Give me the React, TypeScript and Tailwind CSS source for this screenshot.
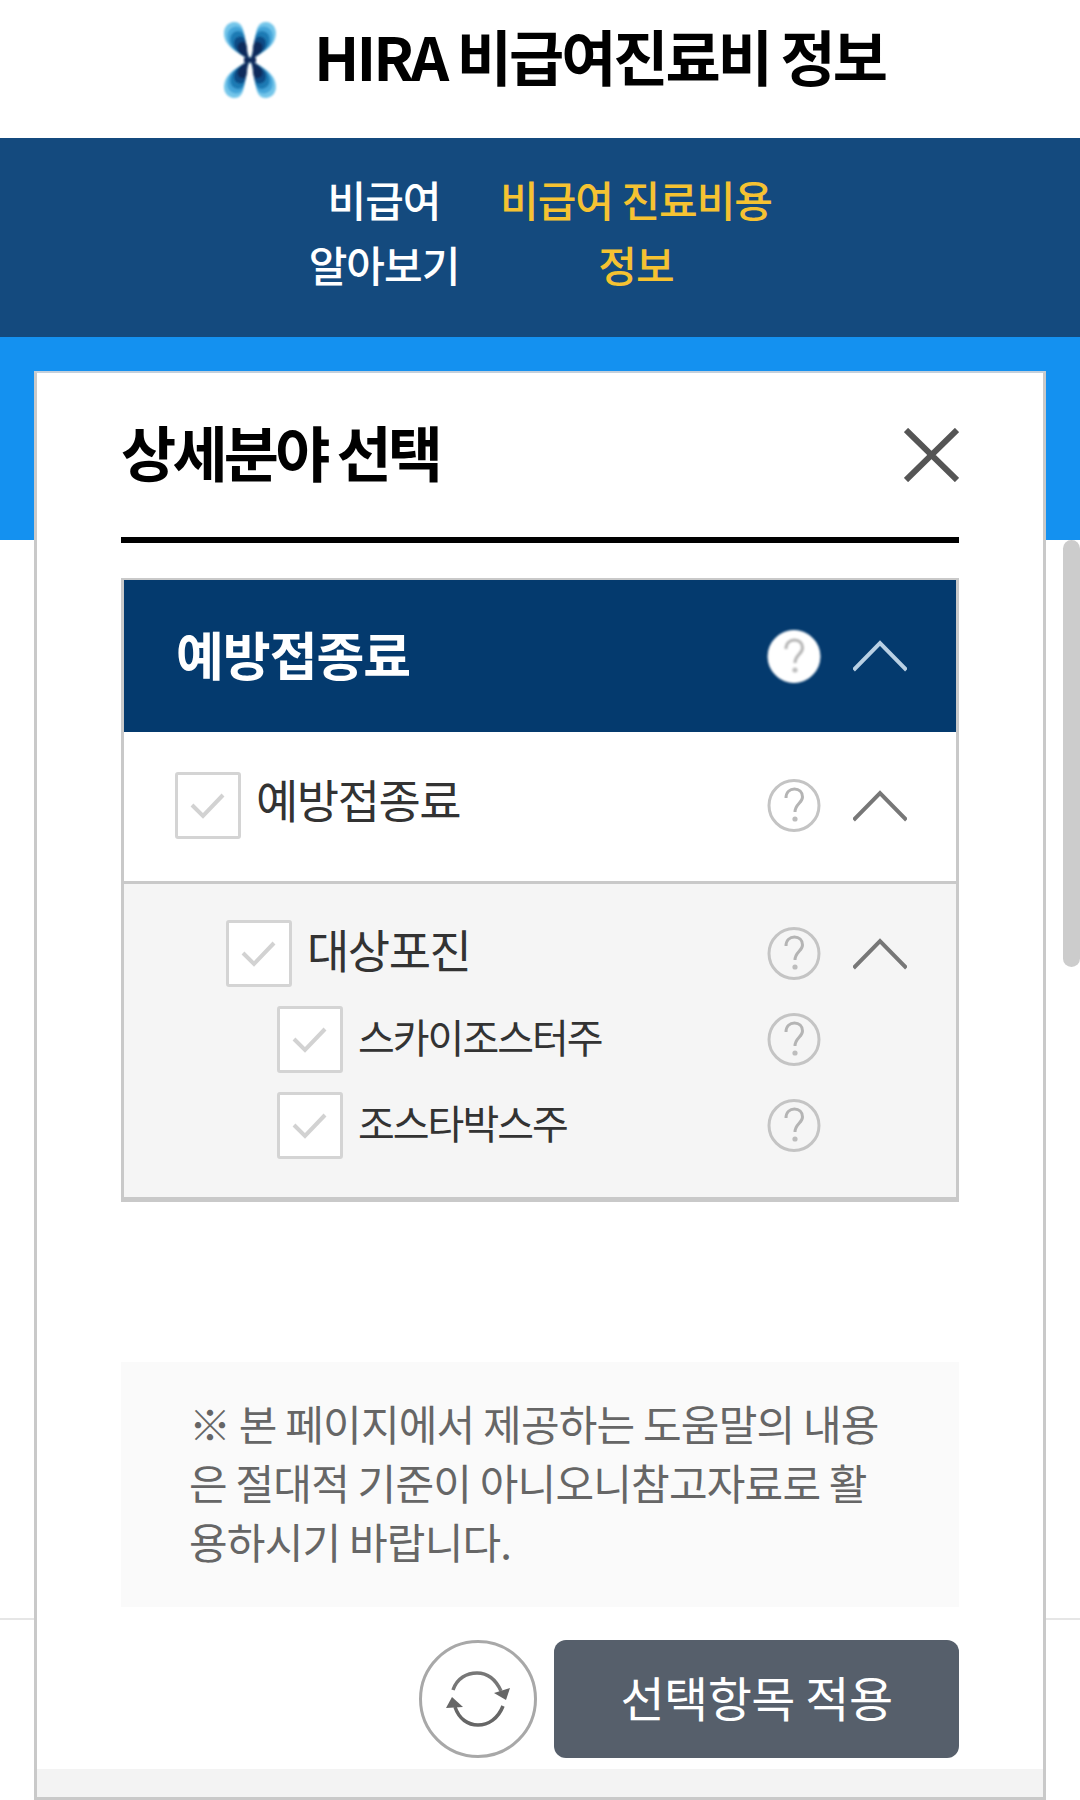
import React from "react";

const lobe = "M50,50 C46,46 33,42 27,33 C22,25 23,14 33,12 C41,11 44,18 44,27 C44,36 47,44 50,50 Z";

function Logo() {
  const layers = (
    <>
      <path d={lobe} fill="#74c6ea" />
      <path d={lobe} fill="#45a5d9" transform="translate(6 6) scale(0.88)" />
      <path d={lobe} fill="#1f7ab4" transform="translate(12 12) scale(0.76)" />
      <path d={lobe} fill="#0c4b86" transform="translate(19 19) scale(0.62)" />
      <path d={lobe} fill="#082c5c" transform="translate(26 26) scale(0.48)" />
    </>
  );
  return (
    <svg width="60" height="80" viewBox="20 10 60 80" className="mt-[20px] shrink-0">
      <defs>
        <filter id="soft"><feGaussianBlur stdDeviation="0.9" /></filter>
      </defs>
      <g filter="url(#soft)">
        <g>{layers}</g>
        <g transform="matrix(-1 0 0 1 100 0)">{layers}</g>
        <g transform="matrix(1 0 0 -1 0 100)">{layers}</g>
        <g transform="matrix(-1 0 0 -1 100 100)">{layers}</g>
        <rect x="44" y="47.5" width="12" height="5" fill="#082c5c" />
      </g>
    </svg>
  );
}

function Help({ filled }: { filled?: boolean }) {
  return (
    <svg width="54" height="55" viewBox="0 0 54 55" className={filled ? "shrink-0 blur-[1px]" : "shrink-0 blur-[0.5px]"}>
      <circle cx="27" cy="27.5" r={filled ? 26 : 25} fill={filled ? "#ffffff" : "none"} stroke={filled ? "#ffffff" : "#c4c4c4"} strokeWidth={filled ? 1 : 3} />
      <path d="M19 20 C19 14 23 11 27.5 11 C32 11 35.5 14 35.5 19 C35.5 25 28 26 28 34" fill="none" stroke="#b4b4b4" strokeWidth="3" />
      <circle cx="28" cy="41" r="2.6" fill="#bdbdbd" />
    </svg>
  );
}

function Chevron({ light }: { light?: boolean }) {
  return (
    <svg width="54" height="32" viewBox="0 0 54 32" className="shrink-0 blur-[0.4px]">
      <path d="M0.5 30 L27 3 L53.5 30" fill="none" stroke={light ? "#b9d0e4" : "#777777"} strokeWidth="4" />
    </svg>
  );
}

function Check() {
  return (
    <div className="flex h-[67px] w-[66px] shrink-0 items-center justify-center rounded-[3px] border-[3px] border-[#d4d4d4] bg-white blur-[0.4px]">
      <svg width="40" height="30" viewBox="0 0 40 30">
        <path d="M4 14 L15 25 L35 4" fill="none" stroke="#d2d2d2" strokeWidth="4" />
      </svg>
    </div>
  );
}

function Actions({ chevron }: { chevron?: boolean }) {
  return (
    <div className="ml-auto flex h-[67px] items-center gap-[32px]">
      <Help />
      {chevron ? <Chevron /> : <div className="w-[54px]" />}
    </div>
  );
}

export default function App() {
  return (
    <div className="relative h-[1800px] w-[1080px] overflow-hidden bg-white font-['Noto_Sans_CJK_KR','Noto_Sans',sans-serif]">
      <div className="flex h-[138px] items-start pl-[220px]">
        <Logo />
        <h1 className="ml-[34px] mt-[15px] text-[60px] font-bold leading-[80px] tracking-[-3px] text-black">HIRA 비급여진료비 정보</h1>
      </div>
      <nav className="flex h-[199px] bg-[#144a7e] pl-[284px] pt-[28px] text-[42px] font-medium leading-[65px] tracking-[-1px]">
        <div className="w-[200px] text-center text-white">비급여<br />알아보기</div>
        <div className="w-[304px] text-center text-[#f5c232]">비급여 진료비용<br />정보</div>
      </nav>
      <div className="h-[203px] bg-[#1491f0]" />
      <div className="mt-[1078px] border-t-2 border-[#e6e6e6]" />

      <div className="absolute right-0 top-[540px] h-[427px] w-[17px] rounded-full bg-[#cccccc]" />

      <section className="absolute left-[34px] top-[371px] flex h-[1429px] w-[1012px] flex-col border-x-[3px] border-b-[3px] border-t-2 border-x-[#c9c9c9] border-b-[#c9c9c9] border-t-[#c4d0dc] bg-white">
        <div className="px-[84px]">
          <div className="flex h-[170px] items-center justify-between border-b-[6px] border-black">
            <h2 className="-mt-[8px] text-[60px] font-bold tracking-[-3.8px] text-black">상세분야 선택</h2>
            <svg width="55" height="54" viewBox="0 0 55 54" className="blur-[0.4px]">
              <path d="M2 2 L53 52 M53 2 L2 52" fill="none" stroke="#555555" strokeWidth="6" />
            </svg>
          </div>

          <div className="mt-[35px] border-x-[3px] border-b-[5px] border-t-2 border-[#c9c9c9]">
            <div className="flex h-[152px] items-center bg-[#043a6e] pl-[52px] pr-[49px]">
              <span className="-mt-[4px] text-[52px] font-bold tracking-[-1px] text-white">예방접종료</span>
              <div className="ml-auto flex items-center gap-[32px]">
                <Help filled />
                <Chevron light />
              </div>
            </div>
            <div className="flex h-[149px] items-start gap-[15px] pl-[51px] pr-[49px] pt-[40px] text-[46px] tracking-[-1.5px] text-[#333333]">
              <Check />
              <span className="leading-[53px]">예방접종료</span>
              <Actions chevron />
            </div>
            <div className="flex flex-col gap-[19px] border-t-[3px] border-[#c9c9c9] bg-[#f5f5f5] pb-[38px] pl-[102px] pr-[49px] pt-[36px] tracking-[-2px] text-[#333333]">
              <div className="flex items-center gap-[15px] text-[46px] tracking-[-1.5px]">
                <Check />
                <span className="-mt-[10px]">대상포진</span>
                <Actions chevron />
              </div>
              <div className="flex items-center gap-[15px] pl-[51px] text-[40px]">
                <Check />
                <span className="-mt-[7px]">스카이조스터주</span>
                <Actions />
              </div>
              <div className="flex items-center gap-[15px] pl-[51px] text-[40px]">
                <Check />
                <span className="-mt-[7px]">조스타박스주</span>
                <Actions />
              </div>
            </div>
          </div>

          <div className="mt-[160px] h-[245px] bg-[#fafafa] pl-[68px] pt-[31px] text-[42px] leading-[59px] tracking-[-0.8px] text-[#666666]">
            ※ 본 페이지에서 제공하는 도움말의 내용<br />
            은 절대적 기준이 아니오니참고자료로 활<br />
            용하시기 바랍니다.
          </div>

          <div className="mt-[33px] flex justify-end gap-[17px]">
            <button className="flex h-[118px] w-[118px] items-center justify-center rounded-full border-[3px] border-[#a8a8a8] bg-white">
              <svg width="64" height="56" viewBox="0 0 64 56" className="blur-[0.6px]">
                <path d="M7 19 C11 7 21 2 31 2 C42 2 50 9 55 20" fill="none" stroke="#777777" strokeWidth="3.5" />
                <path d="M48 22 L64 17 L60 29 Z" fill="#666666" />
                <path d="M57 35 C52 48 42 54 32 54 C22 54 13 48 9 36" fill="none" stroke="#666666" strokeWidth="3.5" />
                <path d="M0 37 L6 26 L17 36 Z" fill="#666666" />
              </svg>
            </button>
            <button className="h-[118px] w-[405px] rounded-[12px] bg-[#565f6b] pb-[6px] text-[48px] tracking-[-0.5px] text-white">선택항목 적용</button>
          </div>
        </div>
        <div className="mt-auto h-[28px] bg-[#f3f3f3]" />
      </section>
    </div>
  );
}
